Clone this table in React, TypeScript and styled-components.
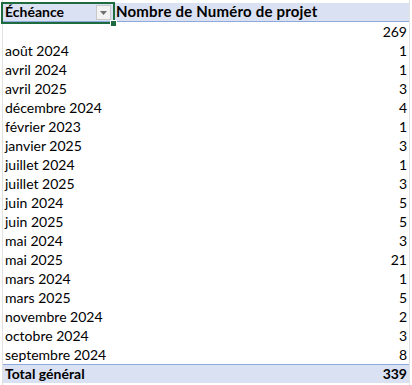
import styled, { createGlobalStyle } from "styled-components";

const GlobalStyle = createGlobalStyle`
  html, body {
    margin: 0;
    background: #ffffff;
  }
  body {
    font-family: Lato, "Liberation Sans", sans-serif;
    color: #000000;
  }
`;

const Sheet = styled.div`
  width: 412px;
  height: 385px;
  overflow: hidden;
  background: #ffffff;
`;

const Frame = styled.div`
  margin-left: 2px;
  width: 408px;
  height: 385px;
  box-sizing: border-box;
  padding-top: 3px;
  border-left: 1px solid #e1e1e1;
  border-right: 1px solid #e1e1e1;
`;

const Row = styled.div<{ $kind?: "head" | "total" }>`
  display: grid;
  grid-template-columns: 111px 1fr;
  height: 19px;
  box-sizing: border-box;
  font-size: 14px;
  font-weight: ${(p) => (p.$kind ? 700 : 400)};
  background: ${(p) => (p.$kind ? "#d9e1f2" : "#ffffff")};
  border-bottom: ${(p) => (p.$kind === "head" ? "1px solid #8ea9db" : "none")};
  border-top: ${(p) => (p.$kind === "total" ? "1px solid #8ea9db" : "none")};
`;

const Cell = styled.div<{ $num?: boolean; $wide?: boolean }>`
  position: relative;
  display: flex;
  align-items: flex-end;
  justify-content: ${(p) => (p.$num ? "flex-end" : "flex-start")};
  padding: ${(p) => (p.$num ? "0 2px 1px 0" : "0 0 1px 2px")};
  white-space: nowrap;
  line-height: 17px;
  font-size: ${(p) => (p.$wide ? "15px" : "inherit")};
  letter-spacing: ${(p) => (p.$wide ? "0.2px" : "normal")};
`;

const Selection = styled.div`
  position: absolute;
  left: -2px;
  top: -1px;
  width: 114px;
  height: 22px;
  box-sizing: border-box;
  border: 2px solid #1e6b3f;
  pointer-events: none;
`;

const Handle = styled.div`
  position: absolute;
  left: 107px;
  top: 17px;
  width: 5px;
  height: 5px;
  background: #1e6b3f;
  border: 1px solid #ffffff;
`;

const FilterButton = styled.div`
  position: absolute;
  left: 93px;
  top: 2px;
  width: 15px;
  height: 15px;
  box-sizing: border-box;
  background: #f2f2f2;
  border: 1px solid #c8c8c8;
  display: flex;
  align-items: center;
  justify-content: center;
`;

const rows: [string, number][] = [
  ["", 269],
  ["août 2024", 1],
  ["avril 2024", 1],
  ["avril 2025", 3],
  ["décembre 2024", 4],
  ["février 2023", 1],
  ["janvier 2025", 3],
  ["juillet 2024", 1],
  ["juillet 2025", 3],
  ["juin 2024", 5],
  ["juin 2025", 5],
  ["mai 2024", 3],
  ["mai 2025", 21],
  ["mars 2024", 1],
  ["mars 2025", 5],
  ["novembre 2024", 2],
  ["octobre 2024", 3],
  ["septembre 2024", 8],
];

function App() {
  return (
    <Sheet>
      <GlobalStyle />
      <Frame>
        <Row $kind="head">
          <Cell>
            Échéance
            <FilterButton>
              <svg width="7" height="4" viewBox="0 0 7 4">
                <polygon points="0,0 7,0 3.5,4" fill="#6f6f6f" />
              </svg>
            </FilterButton>
            <Selection />
            <Handle />
          </Cell>
          <Cell $wide>Nombre de Numéro de projet</Cell>
        </Row>
        {rows.map(([label, value], i) => (
          <Row key={i}>
            <Cell>{label}</Cell>
            <Cell $num>{value}</Cell>
          </Row>
        ))}
        <Row $kind="total">
          <Cell>Total général</Cell>
          <Cell $num>339</Cell>
        </Row>
      </Frame>
    </Sheet>
  );
}

export default App;
